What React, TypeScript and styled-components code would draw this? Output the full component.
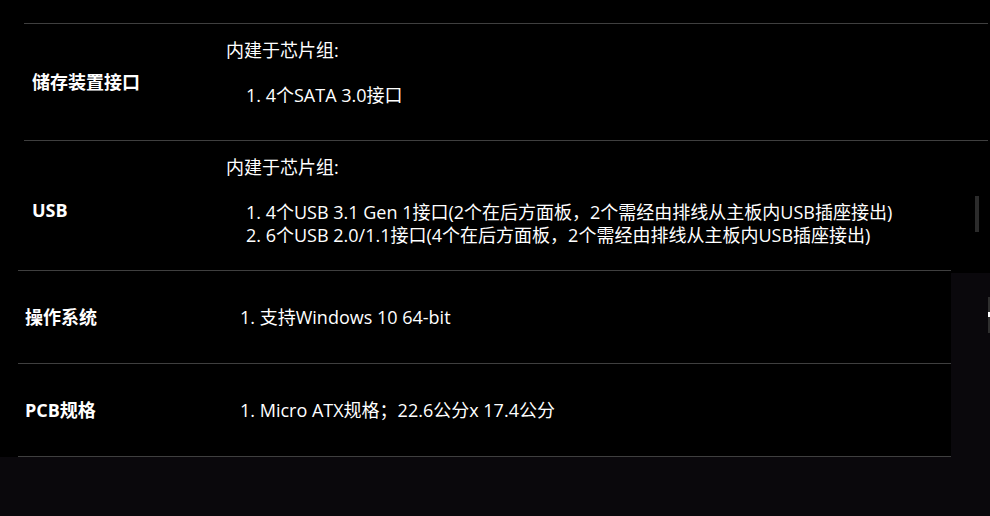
import React from "react";
import styled, { createGlobalStyle } from "styled-components";

const GlobalStyle = createGlobalStyle`
  html, body {
    margin: 0;
    padding: 0;
    overflow: hidden;
    background: #0a080c;
  }
  body {
    font-family: "Open Sans", "Noto Sans CJK SC", sans-serif;
    color: #ffffff;
  }
`;

const Page = styled.div`
  width: 990px;
  height: 516px;
  position: relative;
  background: #0a080c;
`;

const TopPanel = styled.section`
  position: relative;
  height: 270px;
  overflow: hidden;
  background: #000;
  padding: 23px 2px 0 24px;
  box-sizing: border-box;
`;

const SpecTable = styled.div`
  display: flex;
  flex-direction: column;
  border-top: 1px solid #3f3f3f;
`;

const Row = styled.div<{ $labelWidth: number; $minHeight?: number }>`
  display: grid;
  grid-template-columns: ${(p) => p.$labelWidth}px 1fr;
  border-bottom: 1px solid #3f3f3f;
  min-height: ${(p) => (p.$minHeight ? `${p.$minHeight}px` : "auto")};
`;

const Label = styled.div<{ $indent: number }>`
  align-self: center;
  padding-left: ${(p) => p.$indent}px;
  font-size: 18px;
  font-weight: 700;
  line-height: 23px;
  white-space: nowrap;
`;

const Value = styled.div<{ $padTop: number; $padBottom: number }>`
  padding: ${(p) => p.$padTop}px 0 ${(p) => p.$padBottom}px 0;
  font-size: 18px;
  line-height: 23px;
  align-self: center;
`;

const Para = styled.p`
  margin: 0 0 22px 0;
  white-space: nowrap;
`;

const List = styled.ol<{ $indent: number }>`
  margin: 0;
  padding: 0 0 0 ${(p) => p.$indent}px;
  list-style: decimal inside;
  white-space: nowrap;
`;

const BottomArea = styled.div`
  display: flex;
  align-items: flex-start;
`;

const BottomPanel = styled.section`
  width: 951px;
  background: #000;
  padding-left: 18px;
  box-sizing: border-box;
`;

const SideStrip = styled.div`
  flex: 1;
  height: 3px;
  background: #000;
`;

const ScrollThumb = styled.div`
  position: absolute;
  left: 975px;
  top: 196px;
  width: 4px;
  height: 36px;
  background: #2b2b2b;
`;

const HelpTab = styled.div`
  position: absolute;
  left: 988px;
  top: 297px;
  width: 2px;
  height: 36px;
  background: #2f2f2f;
  display: flex;
  align-items: center;
`;

const HelpMark = styled.span`
  display: block;
  width: 2px;
  height: 5px;
  margin-top: -2px;
  background: #fff;
`;

export default function App() {
  return (
    <Page>
      <GlobalStyle />
      <TopPanel>
        <SpecTable>
          <Row $labelWidth={202}>
            <Label $indent={8}>储存装置接口</Label>
            <Value $padTop={15} $padBottom={33}>
              <Para>内建于芯片组:</Para>
              <List $indent={20}>
                <li>4个SATA 3.0接口</li>
              </List>
            </Value>
          </Row>
          <Row $labelWidth={202}>
            <Label $indent={8}>USB</Label>
            <Value $padTop={15} $padBottom={33}>
              <Para>内建于芯片组:</Para>
              <List $indent={20}>
                <li>4个USB 3.1 Gen 1接口(2个在后方面板，2个需经由排线从主板内USB插座接出)</li>
                <li>6个USB 2.0/1.1接口(4个在后方面板，2个需经由排线从主板内USB插座接出)</li>
              </List>
            </Value>
          </Row>
        </SpecTable>
        <ScrollThumb />
      </TopPanel>
      <BottomArea>
        <BottomPanel>
          <SpecTable>
            <Row $labelWidth={222} $minHeight={92}>
              <Label $indent={7}>操作系统</Label>
              <Value $padTop={0} $padBottom={0}>
                <List $indent={0}>
                  <li>支持Windows 10 64-bit</li>
                </List>
              </Value>
            </Row>
            <Row $labelWidth={222} $minHeight={92}>
              <Label $indent={7}>PCB规格</Label>
              <Value $padTop={0} $padBottom={0}>
                <List $indent={0}>
                  <li>Micro ATX规格；22.6公分x 17.4公分</li>
                </List>
              </Value>
            </Row>
          </SpecTable>
        </BottomPanel>
        <SideStrip />
      </BottomArea>
      <HelpTab>
        <HelpMark />
      </HelpTab>
    </Page>
  );
}
